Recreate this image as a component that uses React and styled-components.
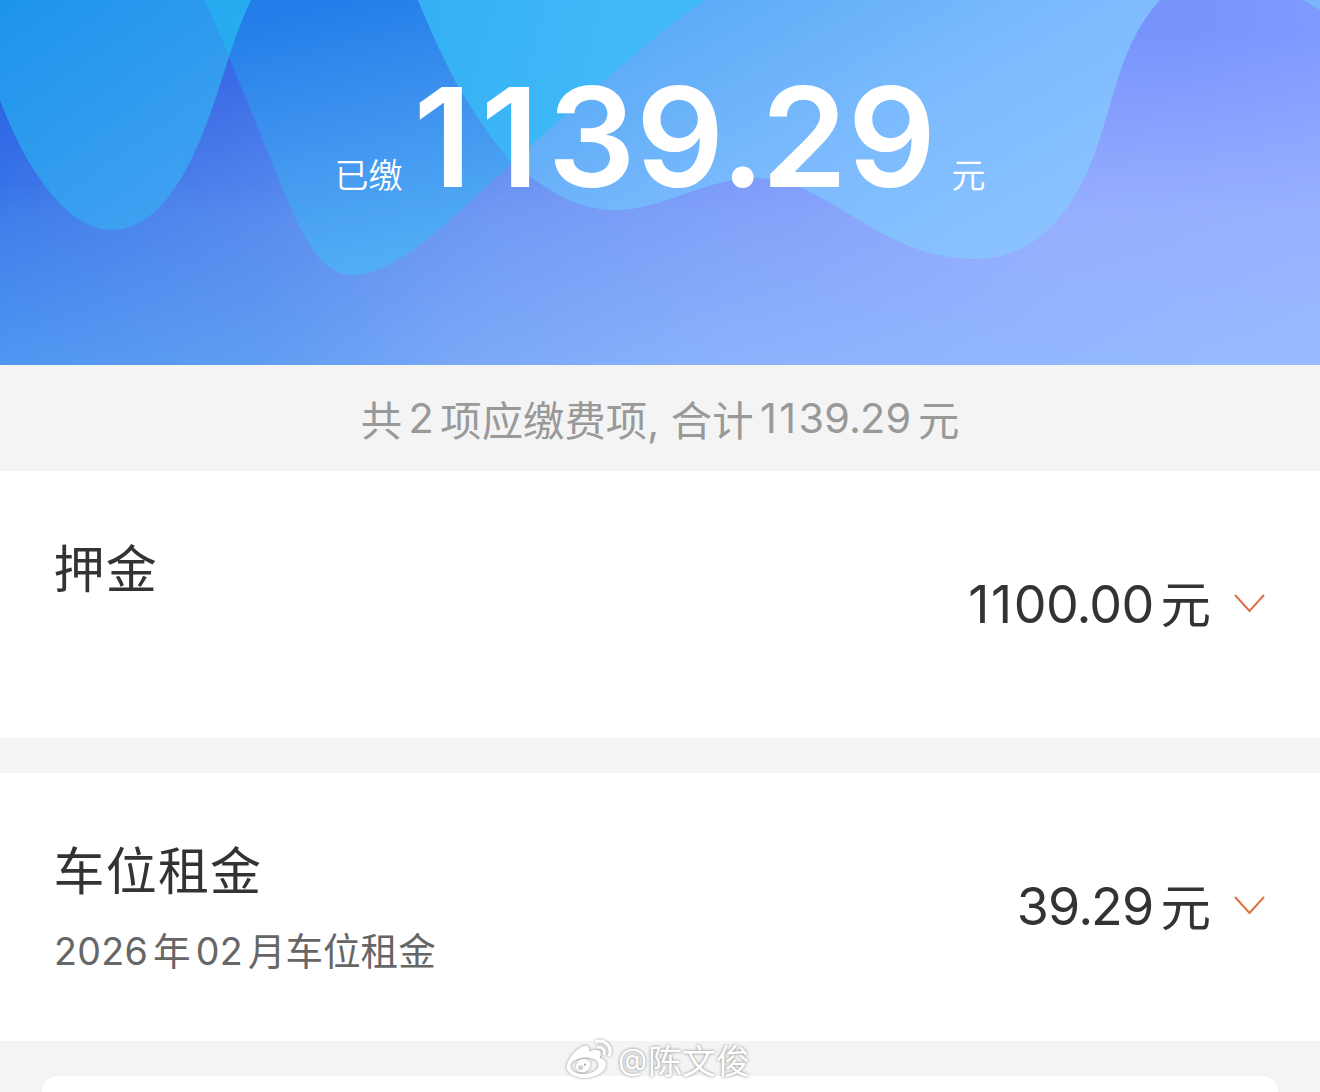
import React from "react";
import styled, { createGlobalStyle } from "styled-components";

const GlobalStyle = createGlobalStyle`
  * {
    box-sizing: border-box;
  }
  body {
    margin: 0;
    background-color: #f4f4f4;
    font-family: Inter, "Noto Sans CJK SC", sans-serif;
    font-kerning: none;
    color: #333;
  }
`;

const Page = styled.div`
  position: relative;
  height: 1092px;
  overflow: hidden;
  display: flex;
  flex-direction: column;
`;

const Header = styled.header`
  position: relative;
  height: 365px;
  flex: none;
  display: flex;
  justify-content: center;
  align-items: baseline;
  padding-top: 53px;
  color: #fff;
`;

const WaveSvg = styled.svg`
  position: absolute;
  top: 0;
  left: 0;
  width: 100%;
  height: 100%;
`;

const Unit = styled.span`
  position: relative;
  top: 1px;
  font-size: 34px;
  font-weight: 350;
  line-height: 1;
`;

const Total = styled.span`
  position: relative;
  margin: 0 15px 0 11px;
  font-size: 138px;
  font-weight: 600;
  line-height: 167px;
`;

const Summary = styled.p`
  flex: none;
  height: 106px;
  margin: 0;
  display: flex;
  justify-content: center;
  align-items: center;
  gap: 6.5px;
  font-size: 41.4px;
  font-weight: 400;
  color: #999;
  white-space: pre;
`;

const Num = styled.span`
  letter-spacing: ${(props) => props.$spacing || 0}em;
`;

const One = styled.span`
  margin-right: ${(props) => props.$gap}em;
`;

const Dot = styled.span`
  margin: 0 -0.028em;
`;

const FeeCard = styled.section`
  flex: none;
  height: ${(props) => props.$height}px;
  margin-bottom: 35px;
  padding: 0 54px;
  display: flex;
  align-items: center;
  justify-content: space-between;
  background-color: #fff;
`;

const FeeInfo = styled.div`
  align-self: flex-start;
  padding-top: 61px;
`;

const FeeName = styled.h2`
  margin: 0 0 0 -0.5px;
  font-size: 51px;
  font-weight: 400;
  line-height: 76px;
  letter-spacing: 1.2px;
`;

const FeeDetail = styled.p`
  margin: 14px 0 0;
  display: flex;
  gap: 5px;
  font-size: 37.6px;
  line-height: 56px;
  color: #666;
`;

const FeeAmount = styled.div`
  display: flex;
  align-items: center;
  font-size: 52px;
  line-height: 76px;
`;

const Yuan = styled.span`
  margin-left: 7px;
  padding-top: 1px;
  font-size: 50.5px;
`;

const Arrow = styled.svg`
  width: 34px;
  height: 22px;
  margin: 0 0.5px 2px 20.5px;
`;

const NextCard = styled.section`
  flex: none;
  height: 60px;
  margin: 0 42px;
  border-radius: 16px;
  background-color: #fff;
`;

const Watermark = styled.div`
  position: absolute;
  left: 564px;
  top: 1035px;
  display: flex;
  align-items: center;
  height: 48px;
  font-size: 34px;
  color: #fff;
  text-shadow: 0 0 3px rgba(0, 0, 0, 0.5);
`;

const At = styled.span`
  margin: 0 1px 0 4px;
  font-size: 30px;
`;

const WeiboLogo = styled.svg`
  width: 50px;
  height: 40px;
  overflow: visible;
  filter: drop-shadow(0 0 1.5px rgba(0, 0, 0, 0.4));
`;

const WAVE_A = "M0 0H251C243 17 236 35 229 57C209 120 177 230 112 230C64 230 22 160 0 100Z";
const WAVE_B = "M204 0C213 20 221 37 229 57C252 112 268 153 285 195C304 240 323 275 351 275C397 275 446 224 512 163C580 102 648 39 705 0Z";
const WAVE_C = "M418 0C431 31 444 60 457 84C476 116 493 141 512 163C545 188 574 210 615 210C664 210 704 178 757 178C827 178 880 259 975 259C1037 259 1073 210 1093 158C1114 103 1120 43 1160 0Z";

const Waves = () => (
  <WaveSvg viewBox="0 0 1320 365" preserveAspectRatio="none">
    <defs>
      <linearGradient id="baseTop">
        <stop offset="0" stopColor="#2259e2" />
        <stop offset=".17" stopColor="#3262e4" />
        <stop offset=".4" stopColor="#5c80ee" />
        <stop offset=".6" stopColor="#7292f8" />
        <stop offset=".9" stopColor="#7894fd" />
        <stop offset="1" stopColor="#7f9aff" />
      </linearGradient>
      <linearGradient id="baseMid">
        <stop offset="0" stopColor="#3b78e8" />
        <stop offset=".17" stopColor="#5385ec" />
        <stop offset=".38" stopColor="#6f97f3" />
        <stop offset=".6" stopColor="#84a0fa" />
        <stop offset=".8" stopColor="#96adfe" />
        <stop offset="1" stopColor="#98b0ff" />
      </linearGradient>
      <linearGradient id="baseBottom">
        <stop offset="0" stopColor="#4f97f1" />
        <stop offset=".2" stopColor="#609df2" />
        <stop offset=".35" stopColor="#7aa8f7" />
        <stop offset=".55" stopColor="#8bb2fc" />
        <stop offset="1" stopColor="#98bbff" />
      </linearGradient>
      <linearGradient id="fadeMid" x1="0" y1="0" x2="0" y2="1">
        <stop offset=".08" stopColor="#fff" stopOpacity="0" />
        <stop offset=".58" stopColor="#fff" />
      </linearGradient>
      <linearGradient id="fadeBottom" x1="0" y1="0" x2="0" y2="1">
        <stop offset=".5" stopColor="#fff" stopOpacity="0" />
        <stop offset="1" stopColor="#fff" />
      </linearGradient>
      <mask id="midMask">
        <rect width="1320" height="365" fill="url(#fadeMid)" />
      </mask>
      <mask id="bottomMask">
        <rect width="1320" height="365" fill="url(#fadeBottom)" />
      </mask>
      <linearGradient id="waveA" gradientUnits="userSpaceOnUse" x1="0" y1="0" x2="150" y2="215">
        <stop offset="0" stopColor="#1c94eb" />
        <stop offset="1" stopColor="#3ea0f1" />
      </linearGradient>
      <linearGradient id="waveB" gradientUnits="userSpaceOnUse" x1="310" y1="0" x2="370" y2="270">
        <stop offset="0" stopColor="#227de9" />
        <stop offset=".5" stopColor="#4094ef" />
        <stop offset="1" stopColor="#53aef5" />
      </linearGradient>
      <linearGradient id="waveC" gradientUnits="userSpaceOnUse" x1="680" y1="20" x2="860" y2="330">
        <stop offset="0" stopColor="#5eacf7" />
        <stop offset=".5" stopColor="#7abafd" />
        <stop offset="1" stopColor="#8ac2ff" />
      </linearGradient>
      <linearGradient id="overlap" gradientUnits="userSpaceOnUse" x1="220" y1="0" x2="600" y2="100">
        <stop offset="0" stopColor="#26abf0" />
        <stop offset="1" stopColor="#41b8f8" />
      </linearGradient>
      <clipPath id="clipB">
        <path d={WAVE_B} />
      </clipPath>
    </defs>
    <rect width="1320" height="365" fill="url(#baseTop)" />
    <rect width="1320" height="365" fill="url(#baseMid)" mask="url(#midMask)" />
    <rect width="1320" height="365" fill="url(#baseBottom)" mask="url(#bottomMask)" />
    <path d={WAVE_A} fill="url(#waveA)" />
    <path d={WAVE_B} fill="url(#waveB)" />
    <path d={WAVE_C} fill="url(#waveC)" />
    <g clipPath="url(#clipB)" fill="url(#overlap)">
      <path d={WAVE_A} />
      <path d={WAVE_C} />
    </g>
    <path d="M1304 0L1320 10V0Z" fill="#7db5fd" />
  </WaveSvg>
);

// the ones sit too close and the point too wide without this
const Money = ({ value, spacing, gap }) => (
  <Num $spacing={spacing}>
    {value.split("").map((char, i) => {
      if (char === "1") return <One key={i} $gap={gap}>{char}</One>;
      if (char === ".") return <Dot key={i}>{char}</Dot>;
      return char;
    })}
  </Num>
);

const fees = [
  { id: 1, name: "押金", amount: "1100.00", height: 267 },
  { id: 2, name: "车位租金", amount: "39.29", height: 268, year: "2026", month: "02", detail: "月车位租金" },
];

const Fee = ({ fee }) => (
  <FeeCard $height={fee.height}>
    <FeeInfo>
      <FeeName>{fee.name}</FeeName>
      {fee.year && (
        <FeeDetail>
          <Num $spacing={0.008}>{fee.year}</Num>
          <span>年</span>
          <Num $spacing={0.008}>{fee.month}</Num>
          <span>{fee.detail}</span>
        </FeeDetail>
      )}
    </FeeInfo>
    <FeeAmount>
      <Money value={fee.amount} spacing={-0.014} gap={0.045} />
      <Yuan>元</Yuan>
      <Arrow viewBox="0 0 34 22" fill="none" stroke="#dc7146" strokeWidth="2">
        <path d="M3 2L17.5 18L32 2" />
      </Arrow>
    </FeeAmount>
  </FeeCard>
);

const App = () => (
  <Page>
    <GlobalStyle />
    <Header>
      <Waves />
      <Unit>已缴</Unit>
      <Total>
        <Money value="1139.29" spacing={0.003} gap={0.06} />
      </Total>
      <Unit>元</Unit>
    </Header>
    <Summary>
      <span>共</span>
      <Num>2</Num>
      <span>项应缴费项, 合计</span>
      <Money value="1139.29" spacing={0.006} gap={0.05} />
      <span>元</span>
    </Summary>
    {fees.map((fee) => (
      <Fee key={fee.id} fee={fee} />
    ))}
    <NextCard />
    <Watermark>
      <WeiboLogo viewBox="0 0 50 40" fill="#fff">
        <path
          fillRule="evenodd"
          d="M2.5 27C4 21 8 15 12 12C18 7 22 5.5 24.5 8C26 10 25.5 11 25 12.5C30 10.5 35 10 36.5 13C37.5 16 35 18 36 19C40 20 42.5 23 42 26C41 34 30 39 20.5 39C11 39 2 34 2.5 27ZM6.5 27.5C7 32.5 13 35.5 21 35C29 34.5 35 30 34.5 25.5C34 20.5 27.5 18 20.5 18.5C12.5 19 6 23 6.5 27.5Z"
        />
        <path
          fillRule="evenodd"
          d="M12 28C12 22.5 16 19.5 20.5 20C25.5 20.5 27.5 24 26 28C24.5 32 20 34 16.5 33C13.5 32.5 12 31 12 28ZM16.5 26.2A2.4 2.4 0 1 0 16.6 31A2.4 2.4 0 1 0 16.5 26.2ZM21 24.5A1.1 1.1 0 1 0 21.1 26.7A1.1 1.1 0 1 0 21 24.5Z"
        />
        <path d="M32.5 2.5C41 0.5 48 7 45.5 16" fill="none" stroke="#fff" strokeWidth="3" strokeLinecap="round" />
        <path d="M33.5 8.5C38 7.5 41.5 11 40 15" fill="none" stroke="#fff" strokeWidth="2.6" strokeLinecap="round" />
      </WeiboLogo>
      <At>@</At>
      <span>陈文俊</span>
    </Watermark>
  </Page>
);

export default App;
